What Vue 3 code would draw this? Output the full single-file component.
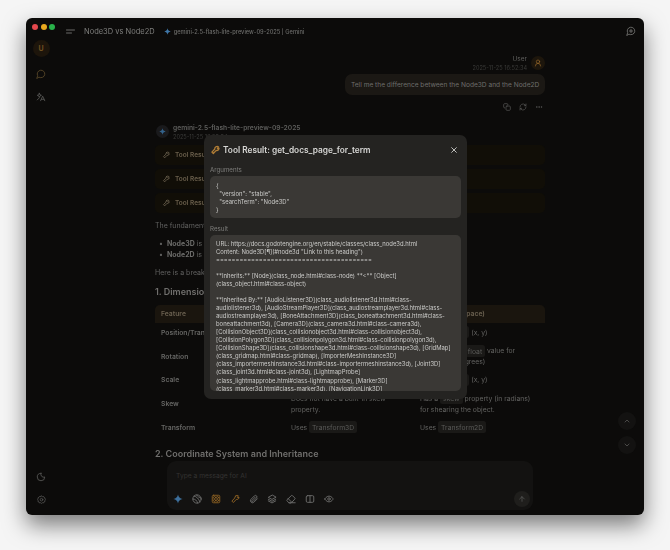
<script setup>
const resultLines = [
  'URL: https://docs.godotengine.org/en/stable/classes/class_node3d.html',
  'Content: Node3D[¶](#node3d "Link to this heading")',
  '========================================',
  '',
  '**Inherits:** [Node](class_node.html#class-node) **<** [Object]',
  '(class_object.html#class-object)',
  '',
  '**Inherited By:** [AudioListener3D](class_audiolistener3d.html#class-',
  'audiolistener3d), [AudioStreamPlayer3D](class_audiostreamplayer3d.html#class-',
  'audiostreamplayer3d), [BoneAttachment3D](class_boneattachment3d.html#class-',
  'boneattachment3d), [Camera3D](class_camera3d.html#class-camera3d),',
  '[CollisionObject3D](class_collisionobject3d.html#class-collisionobject3d),',
  '[CollisionPolygon3D](class_collisionpolygon3d.html#class-collisionpolygon3d),',
  '[CollisionShape3D](class_collisionshape3d.html#class-collisionshape3d), [GridMap]',
  '(class_gridmap.html#class-gridmap), [ImporterMeshInstance3D]',
  '(class_importermeshinstance3d.html#class-importermeshinstance3d), [Joint3D]',
  '(class_joint3d.html#class-joint3d), [LightmapProbe]',
  '(class_lightmapprobe.html#class-lightmapprobe), [Marker3D]',
  '(class_marker3d.html#class-marker3d), [NavigationLink3D]'
]
</script>

<template>
  <div class="page">
    <div class="win">
      <aside class="side">
        <div class="lights"><i class="r"></i><i class="y"></i><i class="g"></i></div>
        <div class="avatar">U</div>
        <svg class="sico chat" viewBox="0 0 24 24"><path d="M7.9 20A9 9 0 1 0 4 16.1L2 22Z"/></svg>
        <svg class="sico tr" viewBox="0 0 24 24"><path d="M8 3l1.4 3.6L13 8l-3.6 1.4L8 13l-1.4-3.6L3 8l3.6-1.4ZM11 21l5-11 5 11M12.8 17.500h6.400M3 19l5-5"/></svg>
        <div class="grow"></div>
        <svg class="sico moon" viewBox="0 0 24 24"><path d="M12 3a7 7 0 0 0 9 9 9 9 0 1 1-9-9Z"/></svg>
        <svg class="sico gear" viewBox="0 0 24 24"><path d="M12 2.500l2.500 1.800 3-.3 1.300 2.800 2.700 1.300-.3 3 1.300 1-1.300 1.900.3 3-2.700 1.300-1.300 2.700-3-.3-2.500 1.800-2.500-1.800-3 .3-1.300-2.700L2.500 17.500l.3-3L1.500 12.500l1.300-1.900-.3-3 2.700-1.300L6.500 4l3 .3Z"/><circle cx="12" cy="12.500" r="3.500"/></svg>
      </aside>

      <main class="main">
        <header class="top">
          <svg class="menu" viewBox="0 0 9 5"><path d="M.5 1h8M.5 4h5"/></svg>
          <span class="title">Node3D vs Node2D</span>
          <svg class="star" viewBox="0 0 24 24"><path d="M12 1c1 6 5 10 11 11-6 1-10 5-11 11-1-6-5-10-11-11 6-1 10-5 11-11Z"/></svg>
          <span class="model">gemini-2.5-flash-lite-preview-09-2025 | Gemini</span>
          <div class="grow"></div>
          <svg class="newchat" viewBox="0 0 24 24"><path d="M7.900 20A9 9 0 1 0 4 16.100L2 22ZM8 12h8M12 8v8"/></svg>
        </header>

        <div class="scroll">
          <section class="user">
            <div class="uhead">
              <div class="umeta"><span class="uname">User</span><span class="date">2025-11-25 16:52:34</span></div>
              <div class="uavatar">
                <svg viewBox="0 0 24 24"><circle cx="12" cy="8" r="5"/><path d="M20 21a8 8 0 0 0-16 0"/></svg>
              </div>
            </div>
            <div class="bubble">Tell me the difference between the Node3D and the Node2D</div>
            <div class="acts">
              <svg viewBox="0 0 24 24"><rect x="9" y="9" width="13" height="13" rx="3"/><path d="M5 15a3 3 0 0 1-3-3V5a3 3 0 0 1 3-3h7a3 3 0 0 1 3 3"/></svg>
              <svg viewBox="0 0 24 24"><path d="M3 12a9 9 0 0 1 15-6.700L21 8M21 3v5h-5M21 12a9 9 0 0 1-15 6.700L3 16M8 16H3v5"/></svg>
              <svg viewBox="0 0 24 24"><circle cx="5" cy="12" r="1"/><circle cx="12" cy="12" r="1"/><circle cx="19" cy="12" r="1"/></svg>
            </div>
          </section>

          <section class="ai">
            <div class="aihead">
              <div class="aiav"><svg viewBox="0 0 24 24"><path d="M12 1c1 6 5 10 11 11-6 1-10 5-11 11-1-6-5-10-11-11 6-1 10-5 11-11Z"/></svg></div>
              <div class="aimeta"><span class="ainame">gemini-2.5-flash-lite-preview-09-2025</span><span class="date">2025-11-25 16:52:34</span></div>
            </div>
            <div v-for="n in 3" :key="n" class="tool">
              <svg viewBox="0 0 24 24"><path d="M14 4.500a5 5 0 0 1 6.500 0l-3 3 1.500 2 2.500-2a5 5 0 0 1-6.500 5.500L8 20.500 4.500 17l7-7.500a5 5 0 0 1 2.500-5Z"/></svg>
              <span>Tool Result: get_docs_page_for_term</span>
            </div>
            <p class="para first">The fundamental difference between Node3D and Node2D in Godot lies in their dimension:</p>
            <ul>
              <li><b>Node3D</b> is the base class for all 3D objects.</li>
              <li><b>Node2D</b> is the base class for all 2D objects.</li>
            </ul>
            <p class="para here">Here is a breakdown of the key differences:</p>
            <h3>1. Dimensionality and Transform</h3>
            <div class="table">
              <div class="row head"><span>Feature</span><span>Node3D (3D Space)</span><span>Node2D (2D Space)</span></div>
              <div class="row r1"><b>Position/Translation</b><span>Uses <code>Vector3</code> (x, y, z)</span><span>Uses <code>Vector2</code> (x, y)</span></div>
              <div class="row r2"><b>Rotation</b><span>Uses <code>Basis</code> or <code>Quaternion</code></span><span>Uses a single <code>float</code> value for<br>rotation (in degrees)</span></div>
              <div class="row r1"><b>Scale</b><span>Uses <code>Vector3</code> (x, y, z)</span><span>Uses <code>Vector2</code> (x, y)</span></div>
              <div class="row r2"><b>Skew</b><span>Does not have a built-in skew<br>property.</span><span>Has a <code>skew</code> property (in radians)<br>for shearing the object.</span></div>
              <div class="row r1"><b>Transform</b><span>Uses <code>Transform3D</code></span><span>Uses <code>Transform2D</code></span></div>
            </div>
            <h3 class="h2">2. Coordinate System and Inheritance</h3>
          </section>
        </div>

        <div class="floats">
          <button class="fab"><svg viewBox="0 0 24 24"><path d="m6 15 6-6 6 6"/></svg></button>
          <button class="fab"><svg viewBox="0 0 24 24"><path d="m6 9 6 6 6-6"/></svg></button>
        </div>

        <div class="input">
          <div class="ph">Type a message for AI</div>
          <div class="tools">
            <svg class="gem" viewBox="0 0 24 24"><path d="M12 1c1 6 5 10 11 11-6 1-10 5-11 11-1-6-5-10-11-11 6-1 10-5 11-11Z"/></svg>
            <svg viewBox="0 0 24 24"><circle cx="12" cy="12" r="10"/><path d="M5 5c6 1 11 6 14 14M2.500 12c5 0 9 3 11 9.500M11 2.500c3 4 6 6 10.500 7"/></svg>
            <svg class="org" viewBox="0 0 24 24"><rect x="3" y="3" width="18" height="18" rx="3"/><circle cx="8.500" cy="8.500" r="2.500"/><circle cx="15.500" cy="8.500" r="2.500"/><circle cx="8.500" cy="15.500" r="2.500"/><circle cx="15.500" cy="15.500" r="2.500"/></svg>
            <svg class="org" viewBox="0 0 24 24"><path d="M14 4.500a5 5 0 0 1 6.500 0l-3 3 1.500 2 2.500-2a5 5 0 0 1-6.500 5.500L8 20.500 4.500 17l7-7.500a5 5 0 0 1 2.500-5Z"/></svg>
            <svg viewBox="0 0 24 24"><path d="M20 11.500l-8.500 8.500a5 5 0 0 1-7-7L13 4.500a3.400 3.400 0 0 1 5 5l-8.500 8.500a1.700 1.700 0 0 1-2.500-2.500l8-8"/></svg>
            <svg viewBox="0 0 24 24"><path d="M12 3 3 8l9 5 9-5ZM3 12.500l9 5 9-5M3 16.500l9 5 9-5"/></svg>
            <svg viewBox="0 0 24 24"><path d="m7 21-4.300-4.300a2 2 0 0 1 0-2.800l10-10a2 2 0 0 1 2.800 0l5.600 5.600a2 2 0 0 1 0 2.800L13 21ZM22 21H7M5 11l9 9"/></svg>
            <svg viewBox="0 0 24 24"><rect x="3" y="4" width="18" height="16" rx="3"/><path d="M12 4v16"/></svg>
            <svg viewBox="0 0 24 24"><path d="M2 12s3.500-7 10-7 10 7 10 7-3.500 7-10 7-10-7-10-7Z"/><circle cx="12" cy="12" r="3"/></svg>
            <div class="grow"></div>
            <button class="send"><svg viewBox="0 0 24 24"><path d="M12 19V5M5 12l7-7 7 7"/></svg></button>
          </div>
        </div>
      </main>

      <div class="modal">
        <div class="mhead">
          <svg viewBox="0 0 24 24"><path d="M14 4.500a5 5 0 0 1 6.500 0l-3 3 1.500 2 2.500-2a5 5 0 0 1-6.500 5.500L8 20.500 4.500 17l7-7.500a5 5 0 0 1 2.500-5Z"/></svg>
          <span class="mtitle">Tool Result: get_docs_page_for_term</span>
          <div class="grow"></div>
          <svg class="close" viewBox="0 0 24 24"><path d="M5 5l14 14M19 5 5 19"/></svg>
        </div>
        <div class="label">Arguments</div>
        <pre class="code args">{
  "version": "stable",
  "searchTerm": "Node3D"
}</pre>
        <div class="label res">Result</div>
        <div class="code result"><div v-for="(l, i) in resultLines" :key="i" class="line">{{ l }}</div></div>
      </div>
    </div>
  </div>
</template>

<style>
html, body { margin: 0; background: #f5f5f5; }
</style>

<style scoped>
.page { width: 670px; height: 550px; box-sizing: border-box; padding: 18px 26px 35px; font-family: Inter, "Liberation Sans", sans-serif; overflow: hidden; }
.win { position: relative; height: 100%; display: flex; background: #0c0b0a; border-radius: 6px; box-shadow: 0 10px 22px rgba(0,0,0,.5); filter: blur(.35px); will-change: filter; }
.grow { flex: 1; }
svg { fill: none; stroke: currentColor; stroke-width: 2; stroke-linecap: round; stroke-linejoin: round; display: block; }
.side { width: 30px; display: flex; flex-direction: column; align-items: center; flex: none; box-sizing: border-box; padding-bottom: 11px; }
.lights { display: flex; gap: 2.500px; margin-top: 6px; height: 7px; align-self: flex-start; padding-left: 6px; }
.lights i { width: 6px; height: 6px; border-radius: 50%; }
.r { background: #e5484d; } .y { background: #e9a91f; } .g { background: #29b24a; }
.avatar { width: 17px; height: 17px; margin-top: 9px; border-radius: 50%; background: #1d150b; color: #6f5020; font-size: 7px; font-weight: 700; display: flex; align-items: center; justify-content: center; }
.sico { width: 10px; height: 10px; color: #5a5a58; }
.chat { margin-top: 12px; color: #5d4a2a; }
.tr { margin-top: 13px; }
.gear { margin-top: 13px; width: 9px; height: 9px; }
.main { position: relative; flex: 1; min-width: 0; display: flex; flex-direction: column; }
.top { height: 26px; flex: none; display: flex; align-items: center; padding: 0 8px 0 10px; }
.menu { width: 9px; height: 5px; color: #6a6a68; stroke-width: 1; }
.title { margin-left: 9px; font-size: 7.500px; color: #7e7e7c; white-space: nowrap; }
.star { width: 7px; height: 7px; fill: #3f77a8; stroke: none; margin-left: 9px; }
.model { margin-left: 3px; font-size: 5.700px; font-weight: 500; color: #6c6c6a; white-space: nowrap; }
.newchat { width: 10px; height: 10px; color: #777775; }
.scroll { flex: 1; min-height: 0; overflow: hidden; padding: 0 99px; }
.user { display: flex; flex-direction: column; align-items: flex-end; margin-top: 8px; padding-top: 3px; }
.uhead { display: flex; align-items: center; gap: 4px; }
.umeta { display: flex; flex-direction: column; align-items: flex-end; gap: 2px; }
.uname { font-size: 6.500px; color: #5f5f5d; }
.date { font-size: 5.600px; color: #3a3a38; white-space: nowrap; }
.uavatar { width: 14px; height: 14px; border-radius: 50%; background: #1d160c; color: #9a6a2a; display: flex; align-items: center; justify-content: center; }
.uavatar svg { width: 8px; height: 8px; }
.bubble { margin-top: 3px; width: 200px; height: 21px; box-sizing: border-box; padding: 0 6px; display: flex; align-items: center; background: #1b1814; border-radius: 7px; font-size: 6.600px; color: #6e6e6c; white-space: nowrap; }
.acts { display: flex; gap: 8px; margin-top: 8px; color: #5c5c5a; padding-right: 2px; }
.acts svg { width: 8px; height: 8px; }
.ai { margin-top: 11px; }
.aihead { display: flex; align-items: center; gap: 4px; margin-left: 1px; height: 19px; }
.aiav { width: 13px; height: 13px; border-radius: 50%; background: #1a1a1c; display: flex; align-items: center; justify-content: center; }
.aiav svg { width: 7px; height: 7px; fill: #34638c; stroke: none; }
.aimeta { display: flex; flex-direction: column; gap: 2px; }
.ainame { font-size: 6.700px; font-weight: 600; color: #5e5e5c; white-space: nowrap; }
.tool { height: 20px; margin-top: 4px; box-sizing: border-box; padding-left: 7px; display: flex; align-items: center; gap: 5px; background: #110e07; border-radius: 5px; color: #6a5f4c; font-size: 6.500px; font-weight: 600; white-space: nowrap; }
.tool svg { width: 8px; height: 8px; stroke-width: 2.600; }
.para { margin: 0; font-size: 7px; line-height: 10px; color: #616160; white-space: nowrap; }
.first { margin-top: 8px; }
ul { list-style: none; margin: 7px 0 0; padding: 0 0 0 4px; }
li { font-size: 7px; line-height: 11px; color: #616160; white-space: nowrap; }
li::before { content: "•"; margin-right: 4px; }
li b { color: #6c6c6a; }
.here { margin-top: 8px; }
h3 { margin: 8px 0 0; font-size: 9px; line-height: 12px; font-weight: 600; color: #706f6d; white-space: nowrap; }
.table { margin-top: 7px; font-size: 6.800px; line-height: 10.700px; color: #626260; }
.row { display: grid; grid-template-columns: 130px 129px 1fr; align-items: center; padding: 0 6px; }
.row > * { min-width: 0; }
.row b { color: #666664; font-weight: 600; white-space: nowrap; }
.head { height: 18px; background: #1a150e; border-radius: 5px 5px 0 0; font-weight: 600; color: #6a6050; }
.r1 { height: 20.500px; }
.r2 { height: 27px; }
code { font-family: inherit; background: #1a1917; border-radius: 2.500px; padding: 1.500px 3px; color: #5a5a58; }
.h2 { margin-top: 9px; }
.floats { position: absolute; right: 8px; top: 394px; display: flex; flex-direction: column; gap: 6px; }
.fab { width: 18px; height: 18px; padding: 0; border: 0; border-radius: 50%; background: #131211; color: #656563; display: flex; align-items: center; justify-content: center; }
.fab svg { width: 8px; height: 8px; }
.input { position: absolute; left: 111px; right: 111px; bottom: 5px; height: 49px; box-sizing: border-box; padding: 10px 7px 3px 9px; background: #131211; border-radius: 9px; display: flex; flex-direction: column; justify-content: space-between; }
.ph { font-size: 6.700px; line-height: 10px; color: #333331; }
.tools { display: flex; align-items: center; gap: 8.900px; color: #6a6a68; height: 16px; margin-left: -3px; }
.tools > svg { width: 10px; height: 10px; stroke-width: 2.300; }
.tools .gem { fill: #3d6f9c; stroke: none; }
.tools .org { color: #8a5f22; }
.send { width: 16px; height: 16px; padding: 0; border: 0; border-radius: 50%; background: #1f1e1c; color: #5f5f5d; display: flex; align-items: center; justify-content: center; margin-right: -4px; }
.send svg { width: 8px; height: 8px; }
.modal { position: absolute; left: 178px; top: 117px; width: 263px; height: 264px; box-sizing: border-box; padding: 0 6px; background: #242321; border-radius: 7px; overflow: hidden; }
.mhead { height: 28px; display: flex; align-items: center; color: #b07d35; margin-top: 1px; }
.mhead svg { width: 10px; height: 10px; stroke-width: 3; }
.mtitle { margin-left: 3px; font-size: 8.300px; font-weight: 600; color: #d6d6d4; white-space: nowrap; }
.close { color: #bdbdbb; width: 8px !important; height: 8px !important; margin-right: 3px; }
.label { padding-top: 1px; font-size: 6.200px; line-height: 10px; color: #7d7d7b; }
.code { background: #3a3835; border-radius: 5px; color: #cbcbc9; font-family: inherit; font-size: 5.900px; line-height: 8.030px; }
.args { margin: 1px 0 0; padding: 6px 6px 0; height: 42px; box-sizing: border-box; white-space: pre; }
.res { margin-top: 5px; }
.result { margin-top: 1px; height: 156px; box-sizing: border-box; padding: 5px 6px; overflow: hidden; }
.line { min-height: 8.030px; white-space: nowrap; }
</style>
